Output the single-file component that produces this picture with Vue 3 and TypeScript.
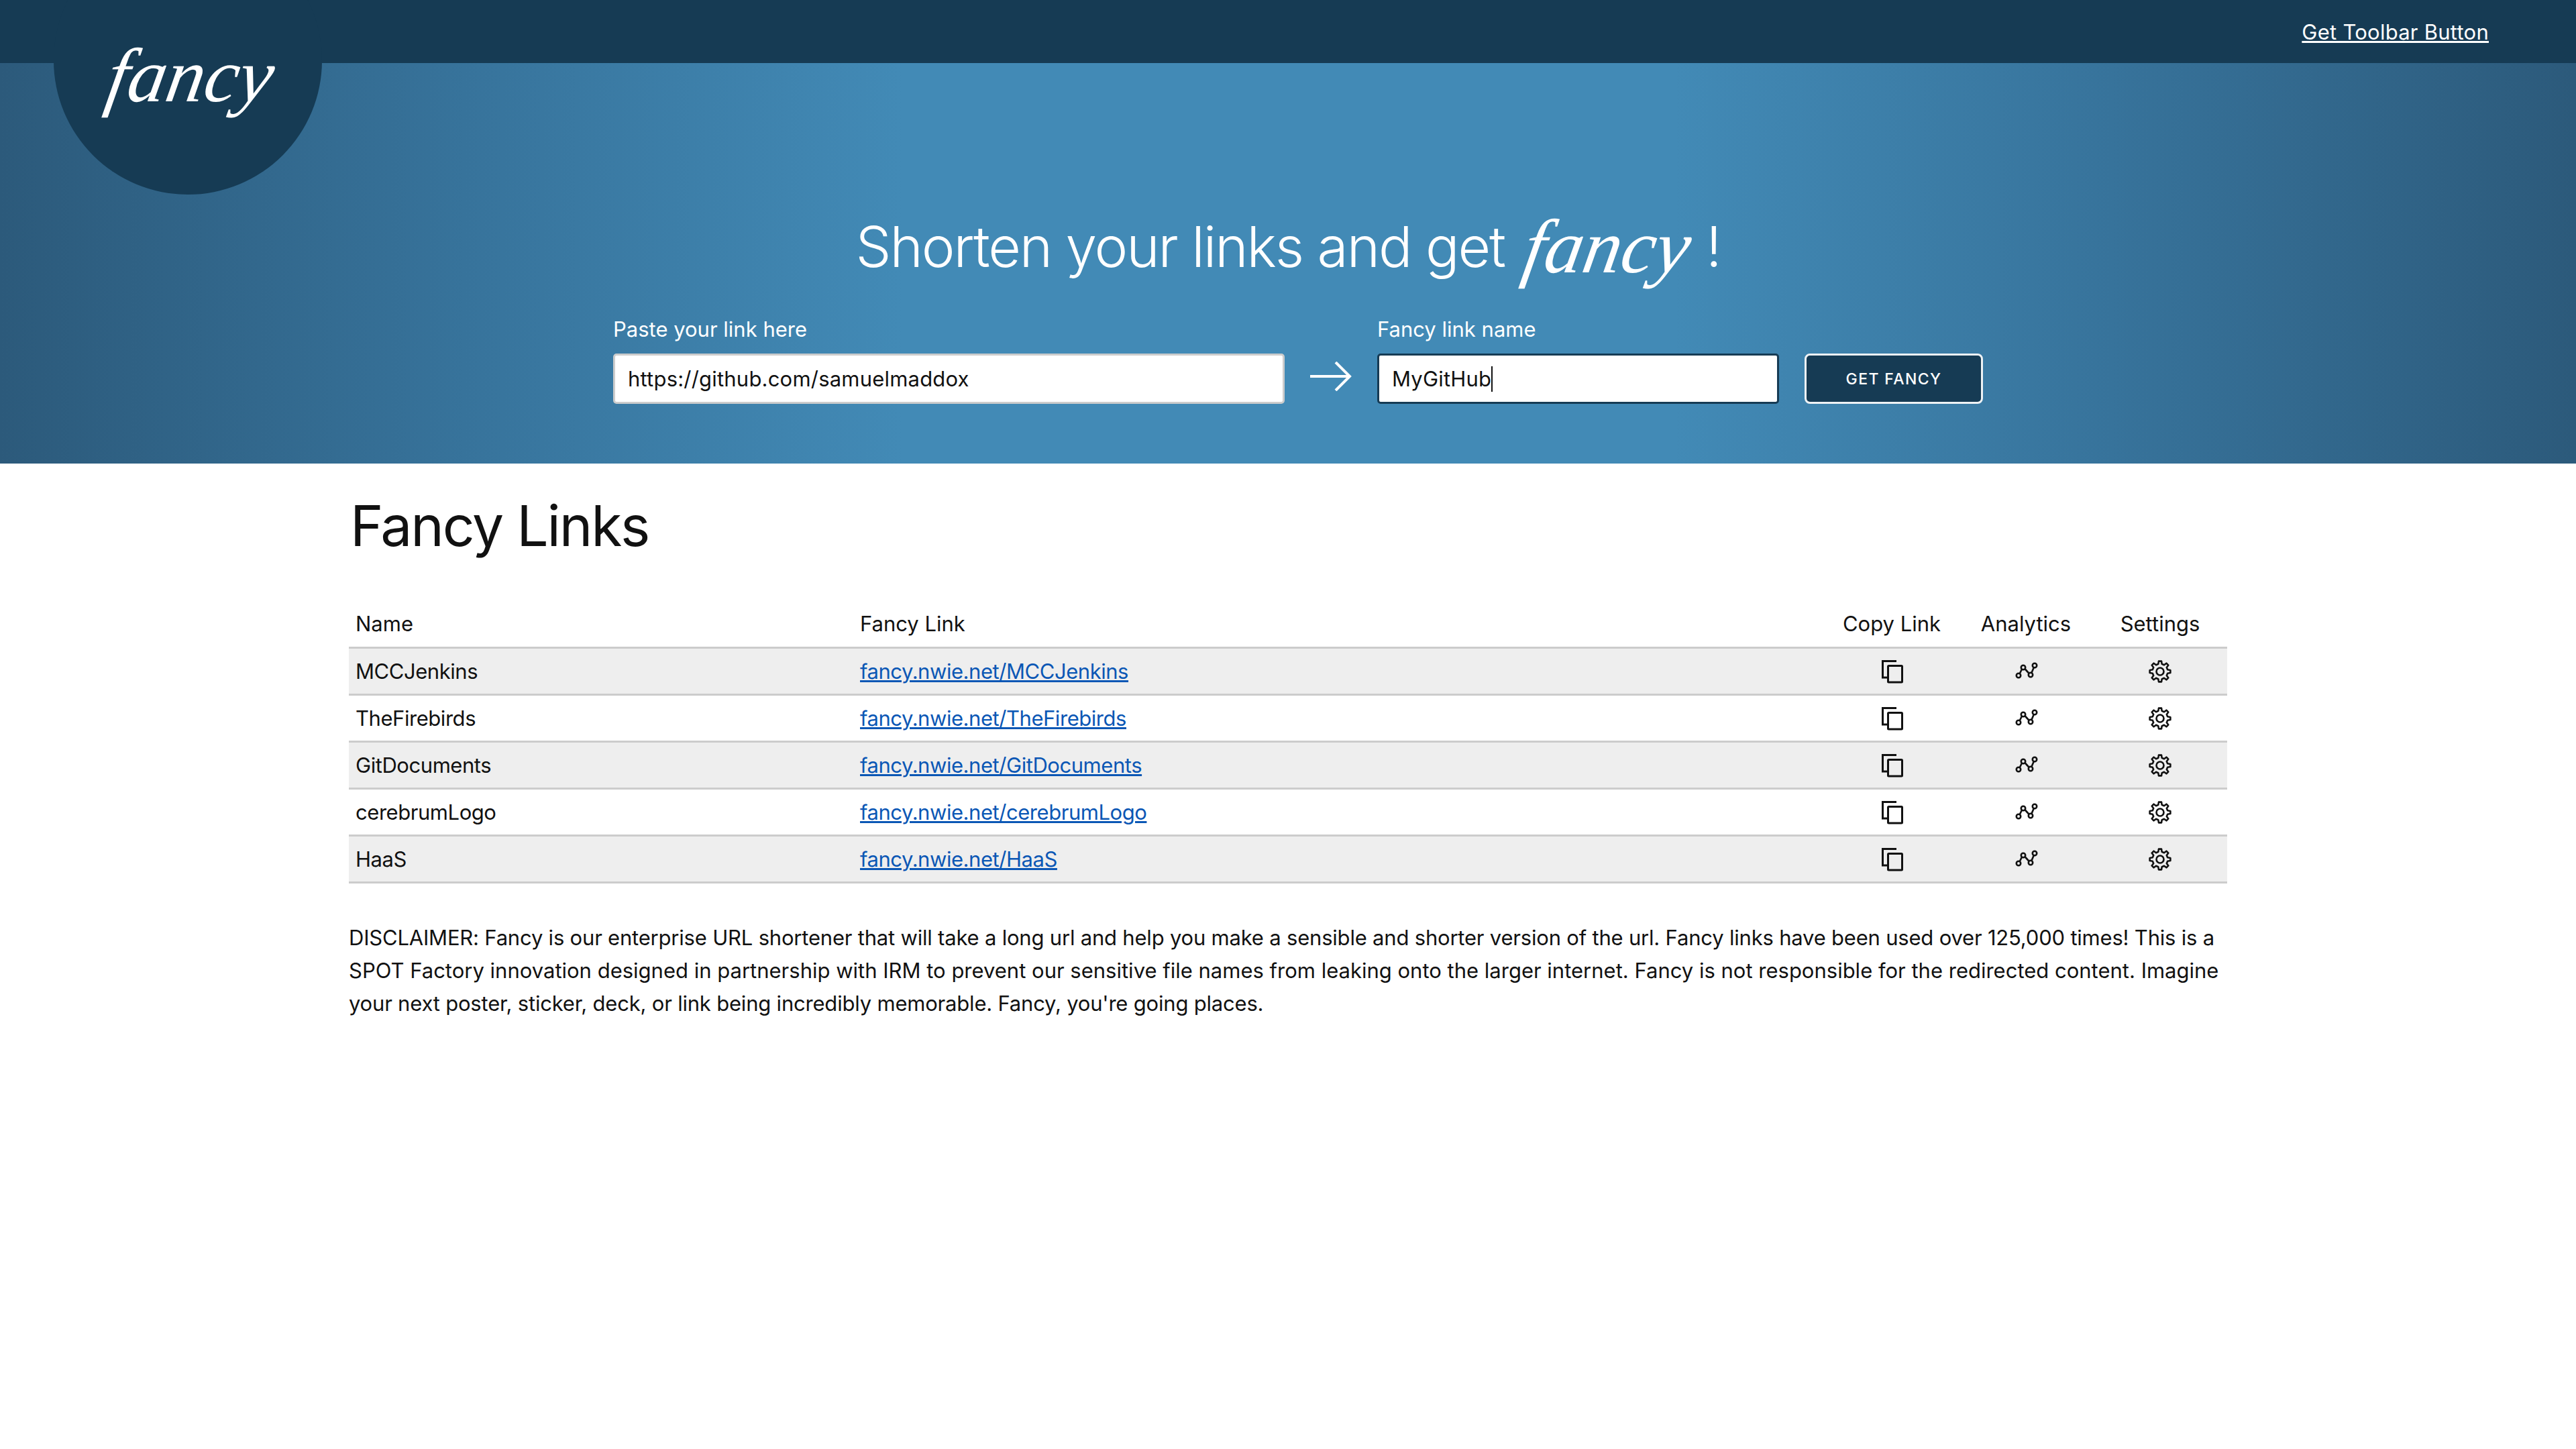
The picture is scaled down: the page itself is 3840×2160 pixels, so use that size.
<template>
  <div class="page">
    <header class="topbar">
      <div class="logo"><span class="script logo-text">fancy</span></div>
      <a class="toolbar-link" href="#">Get Toolbar Button</a>
    </header>

    <section class="hero">
      <h1 class="headline">Shorten your links and get <span class="script headline-script">fancy</span> !</h1>
      <form class="shorten-form" @submit.prevent>
        <div class="field field-url">
          <label>Paste your link here</label>
          <div class="input">https://github.com/samuelmaddox</div>
        </div>
        <svg class="arrow" viewBox="0 0 62 44" fill="none" stroke="#fff" stroke-width="4">
          <path d="M0 22H59" />
          <path d="M38 1 59 22 38 43" />
        </svg>
        <div class="field field-name">
          <label>Fancy link name</label>
          <div class="input input-focus">MyGitHub<span class="caret"></span></div>
        </div>
        <button class="submit" type="submit">GET FANCY</button>
      </form>
    </section>

    <main class="content">
      <h2 class="title">Fancy Links</h2>
      <table class="links">
        <colgroup>
          <col class="col-name" />
          <col />
          <col class="col-action" />
          <col class="col-action" />
          <col class="col-action" />
        </colgroup>
        <thead>
          <tr>
            <th>Name</th>
            <th>Fancy Link</th>
            <th class="center">Copy Link</th>
            <th class="center">Analytics</th>
            <th class="center">Settings</th>
          </tr>
        </thead>
        <tbody>
          <tr v-for="name in links" :key="name">
            <td>{{ name }}</td>
            <td><a href="#">fancy.nwie.net/{{ name }}</a></td>
            <td class="center">
              <svg class="icon" width="36" height="36" viewBox="0 0 36 36" fill="none" stroke="#111" stroke-width="3">
                <rect x="12.5" y="9.5" width="21" height="24.5" rx="1" />
                <path d="M25 2.5H4.5V27H11" />
              </svg>
            </td>
            <td class="center">
              <svg class="icon" width="36" height="36" viewBox="0 0 36 36" fill="none" stroke="#111" stroke-width="2.6">
                <circle cx="7" cy="24" r="3.2" />
                <circle cx="14" cy="12" r="3.2" />
                <circle cx="25" cy="23" r="3.2" />
                <circle cx="31" cy="9" r="3.2" />
                <path d="M8.8 21 12 14.5M16.4 14 22.8 21M26.4 20 29.8 12" />
              </svg>
            </td>
            <td class="center">
              <svg class="icon" width="36" height="36" viewBox="0 0 36 36" fill="none" stroke="#111" stroke-width="2.6">
                <path :d="gearPath" stroke-linejoin="round" />
                <circle cx="18" cy="18" r="5.5" />
              </svg>
            </td>
          </tr>
        </tbody>
      </table>
      <p class="disclaimer">
        <span class="line">DISCLAIMER: Fancy is our enterprise URL shortener that will take a long url and help you make a sensible and shorter version of the url. Fancy links have been used over 125,000 times! This is a</span>
        <span class="line line-wide">SPOT Factory innovation designed in partnership with IRM to prevent our sensitive file names from leaking onto the larger internet. Fancy is not responsible for the redirected content. Imagine</span>
        <span class="line">your next poster, sticker, deck, or link being incredibly memorable. Fancy, you're going places.</span>
      </p>
    </main>
  </div>
</template>

<script setup lang="ts">
const links: string[] = ['MCCJenkins', 'TheFirebirds', 'GitDocuments', 'cerebrumLogo', 'HaaS'];

// Eight toothed gear outline around the centre of a 36 box
const buildGear = (teeth: number, outer: number, inner: number): string => {
  const step = (Math.PI * 2) / teeth;
  const point = (r: number, a: number): string =>
    `${(18 + r * Math.cos(a)).toFixed(2)} ${(18 + r * Math.sin(a)).toFixed(2)}`;
  let d = '';
  for (let i = 0; i < teeth; i++) {
    const a = i * step - Math.PI / 2;
    d += `${i === 0 ? 'M' : 'L'}${point(inner, a - step * 0.3)}`;
    d += `L${point(outer, a - step * 0.17)}L${point(outer, a + step * 0.17)}L${point(inner, a + step * 0.3)}`;
  }
  return d + 'Z';
};

const gearPath = buildGear(8, 15.5, 11.5);
</script>

<style>
body {
  margin: 0;
  background: #fff;
}
</style>

<style scoped>
.page {
  font-family: Inter, "Open Sans", sans-serif;
  color: #111;
  font-size: 31px;
}

.script {
  font-family: "Liberation Serif", serif;
  font-style: italic;
  font-weight: 400;
}

.topbar {
  position: relative;
  z-index: 1;
  height: 94px;
  background: #163b54;
  display: flex;
  align-items: center;
  justify-content: flex-end;
  padding-right: 130px;
}

.logo {
  position: absolute;
  left: 80px;
  top: -110px;
  width: 400px;
  height: 400px;
  border-radius: 50%;
  background: #163b54;
}

.logo-text {
  position: absolute;
  left: 81px;
  top: 166px;
  font-size: 114px;
  line-height: 1;
  color: #fff;
  transform: skewX(-10deg);
}

.toolbar-link {
  position: relative;
  color: #fff;
  font-size: 31px;
  letter-spacing: 0.25px;
  text-decoration: underline;
}

.hero {
  height: 597px;
  box-sizing: border-box;
  padding-top: 214px;
  background: linear-gradient(90deg, #2c5a7b 0%, #37739b 18%, #428ab6 35%, #428ab6 65%, #37739b 82%, #2c5a7b 100%);
  color: #fff;
}

.headline {
  margin: 0;
  text-align: center;
  font-size: 84px;
  line-height: 120px;
  font-weight: 300;
  letter-spacing: -2.1px;
}

.headline-script {
  font-size: 114px;
  line-height: 100px;
  letter-spacing: 0;
  margin: 0 2px 0 8px;
  display: inline-block;
  transform: translateY(8px) skewX(-10deg);
}

.shorten-form {
  display: flex;
  align-items: flex-end;
  margin: 44px 0 0 914px;
}

.field label {
  display: block;
  font-size: 31px;
  font-weight: 400;
  margin-bottom: 18px;
}

.field-url {
  width: 1001px;
}

.field-name {
  width: 599px;
}

.input {
  height: 75px;
  box-sizing: border-box;
  display: flex;
  align-items: center;
  padding: 0 19px;
  background: #fff;
  color: #111;
  border: 3px solid #ccc;
  border-radius: 5px;
  font-size: 31px;
  letter-spacing: 0.2px;
}

.input-focus {
  border-color: #163b54;
}

.caret {
  width: 2px;
  height: 38px;
  background: #111;
}

.arrow {
  width: 62px;
  height: 44px;
  margin: 0 38px 19px 38px;
}

.submit {
  width: 266px;
  height: 75px;
  margin-left: 38px;
  background: #163b54;
  color: #fff;
  border: 3px solid #eef2f5;
  border-radius: 8px;
  font-family: inherit;
  font-size: 23px;
  font-weight: 500;
  letter-spacing: 1.4px;
}

.content {
  width: 2800px;
  margin: 0 auto;
}

.title {
  margin: 43px 0 0 2px;
  font-size: 84px;
  line-height: 100px;
  font-weight: 400;
  letter-spacing: -2.2px;
}

.links {
  width: 100%;
  margin-top: 61px;
  border-collapse: collapse;
  table-layout: fixed;
}

.col-name {
  width: 752px;
}

.col-action {
  width: 200px;
}

.links th,
.links td {
  padding: 0 10px;
  text-align: left;
  font-weight: 400;
  height: 70px;
  box-sizing: border-box;
}

.links th {
  border-bottom: 3px solid #ccc;
}

.links td {
  letter-spacing: -0.45px;
  border-bottom: 3px solid #ccc;
}

.links tbody tr:nth-child(odd) {
  background: #eee;
}

.links .center {
  text-align: center;
}

.links a {
  color: #0b57b5;
}

.icon {
  display: block;
  margin: 1px auto 0;
}

.disclaimer {
  margin: 56px 0 0;
  font-size: 31px;
  line-height: 49px;
  letter-spacing: -0.2px;
  white-space: nowrap;
}

.line {
  display: block;
}

.line-wide {
  letter-spacing: 0;
}
</style>
